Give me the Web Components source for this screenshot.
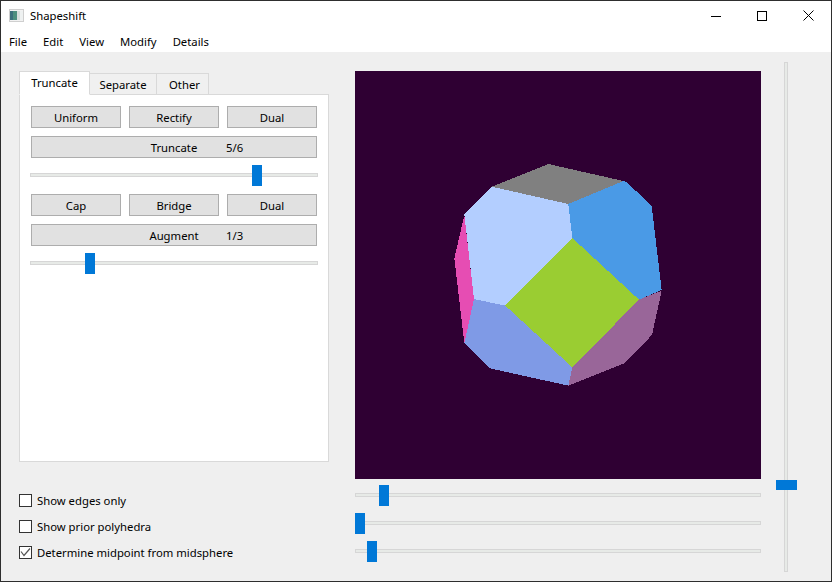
<!DOCTYPE html>
<html><head><meta charset="utf-8">
<style>
html,body{margin:0;padding:0;width:832px;height:582px;overflow:hidden;background:#efefef}
</style></head><body>
<template id="t-window"><style>
:host{display:flex;flex-direction:column;box-sizing:border-box;width:832px;height:582px;border:1px solid #2e2e2e;background:#efefef;color:#000;font:11.3px "Noto Sans","Open Sans",sans-serif}
.main{flex:1;display:flex;min-height:0;padding:10px 0 0 18px}
.left{width:310px;display:flex;flex-direction:column;padding-top:9px}
.right{display:flex;flex-direction:column;margin-left:26px;width:406px;padding-top:9px}
.checks{display:flex;flex-direction:column;gap:9px;margin-top:30px}
.hs{display:flex;flex-direction:column;gap:7px;margin-top:6px}
.v{margin-left:15px}
</style>
<title-bar></title-bar><menu-bar></menu-bar>
<div class="main">
<div class="left"><slot name="tabs"></slot><div class="checks"><slot name="checks"></slot></div></div>
<div class="right"><slot name="canvas"></slot><div class="hs"><slot name="hs"></slot></div></div>
<div class="v"><slot name="v"></slot></div>
</div></template>

<template id="t-title"><style>
:host{display:flex;align-items:center;height:29px;background:#fff}
svg{display:block}
.ico{margin-left:8px;margin-right:6px}
.t{flex:1}
.b{box-sizing:border-box;width:46px;height:29px;padding-right:2px;display:flex;align-items:center;justify-content:center}
.b.last{width:45px;padding-right:0}
</style>
<svg class="ico" width="15" height="13" viewBox="0 0 15 13"><rect width="15" height="13" fill="#cfcfcf"/><rect x="1" y="1" width="13" height="11" fill="#f2f2f2"/><rect x="1" y="2" width="3" height="9" fill="#3b6f7c"/><rect x="4" y="2" width="4" height="9" fill="#4d8f7f"/><rect x="8" y="2" width="3" height="9" fill="#d8dedd"/><rect x="11" y="2" width="3" height="9" fill="#eef1f1"/></svg>
<span class="t">Shapeshift</span>
<div class="b"><svg width="10" height="10"><path d="M0 5.5H10" stroke="#000"/></svg></div>
<div class="b"><svg width="10" height="10"><rect x=".5" y=".5" width="9" height="9" fill="none" stroke="#000"/></svg></div>
<div class="b last"><svg width="11" height="11"><path d="M.5.5L10.5 10.5M10.5.5L.5 10.5" stroke="#000" fill="none"/></svg></div>
</template>

<template id="t-menu"><style>
:host{display:flex;height:22px;background:#fff;align-items:center;padding-left:8px;gap:16px}
</style><span>File</span><span>Edit</span><span>View</span><span>Modify</span><span>Details</span></template>

<template id="t-tabs"><style>
:host{display:block;width:310px;height:391px}
.bar{display:flex;align-items:flex-end;height:23px;position:relative;z-index:1}
.tab{box-sizing:border-box;display:flex;align-items:center;justify-content:center;border:1px solid #d9d9d9;border-bottom:0;background:#f0f0f0;height:21px;margin-left:-1px}
.tab.on{background:#fff;height:24px;width:71px;margin-left:0;border-bottom:1px solid #fff;margin-bottom:-1px;padding-bottom:2px;z-index:1}
.pane{box-sizing:border-box;height:368px;background:#fff;border:1px solid #d9d9d9;padding:11px;display:flex;flex-direction:column}
</style>
<div class="bar"><div class="tab on">Truncate</div><div class="tab" style="width:68px">Separate</div><div class="tab" style="width:53px;padding-left:4px">Other</div></div>
<div class="pane"><slot></slot></div></template>

<template id="t-group"><style>
:host{display:flex;flex-direction:column;gap:8px;margin-bottom:8px}
.row{display:grid;grid-template-columns:repeat(3,90px);gap:8px}
::slotted([slot=slider]){margin-top:-1px}
</style><div class="row"><slot name="row"></slot></div><slot name="wide"></slot><slot name="slider"></slot></template>

<template id="t-btn"><style>
:host{display:flex;box-sizing:border-box;height:22px;align-items:center;justify-content:center;background:#e1e1e1;border:1px solid #adadad}
</style><slot></slot></template>

<template id="t-wide"><style>
:host{display:grid;grid-template-columns:1fr 100px 1fr;box-sizing:border-box;height:22px;align-items:center;background:#e1e1e1;border:1px solid #adadad}
.a{grid-column:2;justify-self:center}
.b{margin-left:2px}
</style><span class="a"><slot name="label"></slot></span><span class="b"><slot name="value"></slot></span></template>

<template id="t-slider"><style>
:host{display:block;position:relative;height:21px}
.g{box-sizing:border-box;position:absolute;left:var(--gl,0);right:var(--gr,0);top:8px;height:4px;background:#e7eae7;border:1px solid #d6d6d6}
.h{position:absolute;top:0;left:var(--x);width:10px;height:21px;background:#0078d7}
</style><div class="g"></div><div class="h"></div></template>

<template id="t-vslider"><style>
:host{display:block;position:relative;width:21px;height:510px}
.g{box-sizing:border-box;position:absolute;left:8px;width:4px;top:0;bottom:0;background:#e7eae7;border:1px solid #d6d6d6}
.h{position:absolute;left:0;top:var(--y);width:21px;height:10px;background:#0078d7}
</style><div class="g"></div><div class="h"></div></template>

<template id="t-check"><style>
:host{display:flex;align-items:center;height:17px;gap:5px}
.box{box-sizing:border-box;width:13px;height:13px;background:#fff;border:1px solid #333;display:block}
</style><svg class="box" viewBox="0 0 11 11"><path class="m" d="M1 4.5L4 8.5L10 1.5" fill="none" stroke="#555" stroke-width="1.2"/></svg><span><slot></slot></span></template>

<template id="t-poly"><style>
:host{display:block;width:406px;height:408px;background:#2f0033}
svg{display:block}
</style><svg width="406" height="408" shape-rendering="crispEdges"><g transform="translate(85 79) scale(.33333)">
<polygon fill="#808080" points="325,42 550,93 385,162 155,110"/>
<polygon fill="#4a9ae6" points="385,162 550,93 558,95 635,167 665,420 597,449 397,264"/>
<polygon fill="#b3ceff" points="155,110 385,162 397,264 196,467 102,447 73,193"/>
<polygon fill="#9acd32" points="397,264 597,449 397,652 196,467"/>
<polygon fill="#996699" points="597,449 665,422 636,555 552,640 385,707 397,652"/>
<polygon fill="#7f9ae6" points="102,447 196,467 397,652 385,707 150,655 73,580"/>
<polygon fill="#e64db3" points="73,195 102,447 73,580 43,325"/>
</g></svg></template>

<app-window>
<tab-panel slot="tabs">
<ctl-group><q-btn slot="row">Uniform</q-btn><q-btn slot="row">Rectify</q-btn><q-btn slot="row">Dual</q-btn>
<wide-btn slot="wide"><span slot="label">Truncate</span><span slot="value">5/6</span></wide-btn>
<q-slider slot="slider" style="--x:221px;--gl:-1px;--gr:-1px"></q-slider></ctl-group>
<ctl-group><q-btn slot="row">Cap</q-btn><q-btn slot="row">Bridge</q-btn><q-btn slot="row">Dual</q-btn>
<wide-btn slot="wide"><span slot="label">Augment</span><span slot="value">1/3</span></wide-btn>
<q-slider slot="slider" style="--x:54px;--gl:-1px;--gr:-1px"></q-slider></ctl-group>
</tab-panel>
<q-check slot="checks">Show edges only</q-check>
<q-check slot="checks">Show prior polyhedra</q-check>
<q-check slot="checks" checked>Determine midpoint from midsphere</q-check>
<poly-view slot="canvas"></poly-view>
<q-slider slot="hs" style="--x:24px"></q-slider>
<q-slider slot="hs" style="--x:0px"></q-slider>
<q-slider slot="hs" style="--x:12px"></q-slider>
<q-vslider slot="v" style="--y:418px"></q-vslider>
</app-window>
<script>
const mk=(name,id)=>customElements.define(name,class extends HTMLElement{constructor(){super();this.attachShadow({mode:'open'}).appendChild(document.getElementById(id).content.cloneNode(true))}});
mk('app-window','t-window');mk('title-bar','t-title');mk('menu-bar','t-menu');mk('tab-panel','t-tabs');mk('ctl-group','t-group');mk('q-btn','t-btn');mk('wide-btn','t-wide');mk('q-slider','t-slider');mk('q-vslider','t-vslider');mk('poly-view','t-poly');
customElements.define('q-check',class extends HTMLElement{constructor(){super();this.attachShadow({mode:'open'}).appendChild(document.getElementById('t-check').content.cloneNode(true))}
connectedCallback(){if(!this.hasAttribute('checked'))this.shadowRoot.querySelector('.m').remove()}});
</script>
</body></html>
